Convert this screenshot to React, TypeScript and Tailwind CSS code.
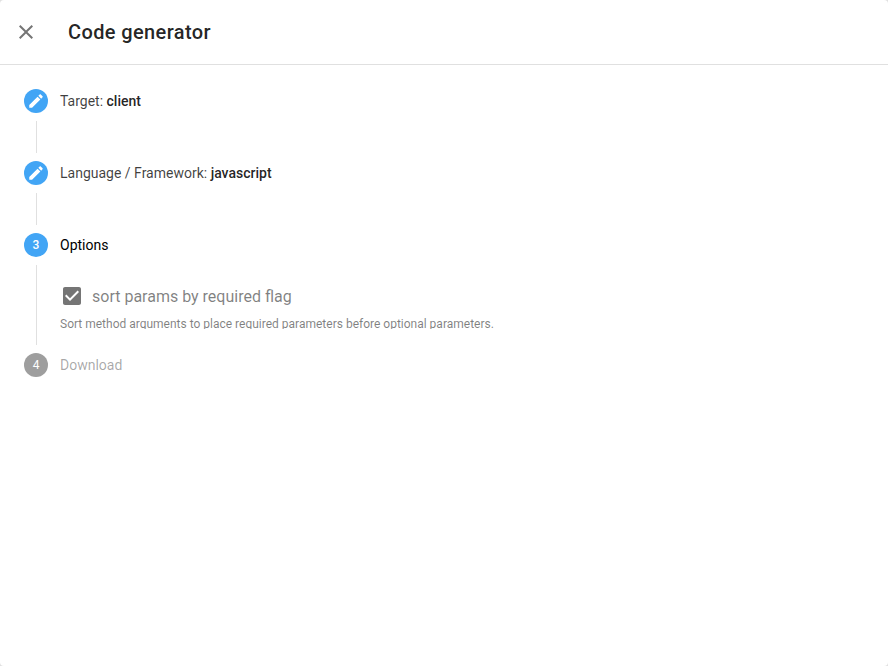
import React from "react";

function Circle({ active, children }: { active?: boolean; children: React.ReactNode }) {
  return (
    <span className={`flex size-6 shrink-0 items-center justify-center rounded-full text-xs text-white ${active ? "bg-[#42a5f5] font-medium" : "bg-[#9e9e9e]"}`}>
      {children}
    </span>
  );
}

function Pencil() {
  return (
    <svg viewBox="0 0 24 24" className="size-[18px] fill-white">
      <path d="M3 17.25V21h3.75L17.81 9.94l-3.75-3.75L3 17.25zM20.71 7.04c.39-.39.39-1.02 0-1.41l-2.34-2.34c-.39-.39-1.02-.39-1.41 0l-1.83 1.83 3.75 3.75 1.83-1.83z" />
    </svg>
  );
}

export default function App() {
  return (
    <div className="bg-[#e0e0e0]">
      <div className="h-[666px] overflow-hidden rounded-sm bg-white font-['Roboto',sans-serif] text-black/87">
        <header className="flex h-[65px] items-center border-b border-[#e0e0e0] pl-3.5">
          <svg viewBox="0 0 24 24" className="size-6 fill-[#757575]">
            <path d="M19 6.41L17.59 5 12 10.59 6.41 5 5 6.41 10.59 12 5 17.59 6.41 19 12 13.41 17.59 19 19 17.59 13.41 12z" />
          </svg>
          <h1 className="ml-[30px] text-xl leading-8 font-medium tracking-[0.38px]">Code generator</h1>
        </header>
        <main className="px-6 pt-6 text-sm leading-5">
          <div className="flex h-6 items-center gap-3">
            <Circle active><Pencil /></Circle>
            <p className="text-black/75">Target: <b className="font-medium text-black/87">client</b></p>
          </div>
          <div className="my-2 ml-3 h-8 border-l border-[#e0e0e0]" />
          <div className="flex h-6 items-center gap-3">
            <Circle active><Pencil /></Circle>
            <p className="text-black/75">Language / Framework: <b className="font-medium text-black/87">javascript</b></p>
          </div>
          <div className="my-2 ml-3 h-8 border-l border-[#e0e0e0]" />
          <div className="flex h-6 items-center gap-3">
            <Circle active>3</Circle>
            <p className="text-black">Options</p>
          </div>
          <div className="my-2 ml-3 h-20 border-l border-[#e0e0e0] pt-[19px] pl-[23px]">
            <div className="flex h-6 items-center gap-2">
              <svg viewBox="0 0 24 24" className="size-6 fill-[#757575]">
                <path d="M19 3H5c-1.11 0-2 .9-2 2v14c0 1.1.89 2 2 2h14c1.11 0 2-.9 2-2V5c0-1.1-.89-2-2-2zm-9 14l-5-5 1.41-1.41L10 14.17l7.59-7.59L19 8l-9 9z" />
              </svg>
              <span className="pt-px text-base text-black/50">sort params by required flag</span>
            </div>
            <p className="mt-2.5 h-[11px] overflow-hidden text-xs leading-3 text-black/50">Sort method arguments to place required parameters before optional parameters.</p>
          </div>
          <div className="flex h-6 items-center gap-3">
            <Circle>4</Circle>
            <p className="text-black/35">Download</p>
          </div>
        </main>
      </div>
    </div>
  );
}
